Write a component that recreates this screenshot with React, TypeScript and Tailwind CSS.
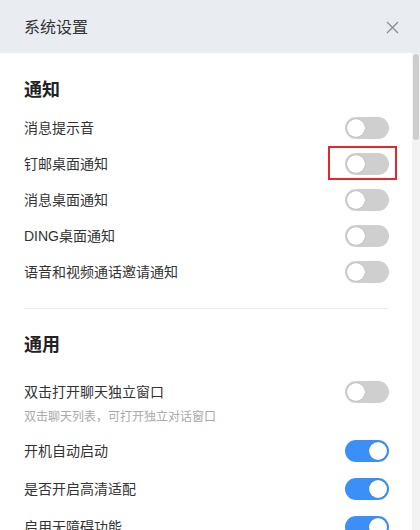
import React from 'react'

const Toggle = ({ on, marked }: { on?: boolean; marked?: boolean }) => (
    <div className="relative shrink-0">
        <div className={`w-[44px] h-[22px] rounded-full flex items-center px-[2px] ${on ? 'bg-[#3b8ff6] justify-end' : 'bg-[#cfcfcf] justify-start'}`}>
            <div className="w-[18px] h-[18px] rounded-full bg-white shadow-[0_0_1px_rgba(0,0,0,0.35)]" />
        </div>
        {marked && (
            <div className="absolute -left-[17px] -top-[7px] w-[69px] h-[34px] border-2 border-[#e5262b]" />
        )}
    </div>
)

const Row = ({ label, on, marked, h = 'h-[36px]' }: { label: string; on?: boolean; marked?: boolean; h?: string }) => (
    <div className={`flex items-center justify-between ${h}`}>
        <span className="text-[14px] text-[#333]">{label}</span>
        <Toggle on={on} marked={marked} />
    </div>
)

export default function App() {
    return (
        <div className="w-[420px] h-[530px] overflow-hidden bg-white flex flex-col" style={{ fontFamily: '"Liberation Sans", "Noto Sans CJK SC", sans-serif' }}>
            <div className="h-[53px] shrink-0 bg-[#e9ecf1] flex items-center justify-between pl-[24px] pr-[21px] pt-[2px]">
                <span className="text-[16px] text-[#333]">系统设置</span>
                <svg width="13" height="13" viewBox="0 0 13 13" stroke="#8a8a8a" strokeWidth="1.2">
                    <path d="M1 1 L12 12 M12 1 L1 12" />
                </svg>
            </div>
            <div className="flex flex-1 min-h-0">
                <div className="flex-1 pl-[24px] pr-[23px] pt-[25px]">
                    <div className="text-[18px] leading-[24px] font-bold text-[#222]">通知</div>
                    <div className="mt-[8px]">
                        <Row label="消息提示音" />
                        <Row label="钉邮桌面通知" marked />
                        <Row label="消息桌面通知" />
                        <Row label="DING桌面通知" />
                        <Row label="语音和视频通话邀请通知" />
                    </div>
                    <div className="mt-[18px] h-px bg-[#ececec]" />
                    <div className="mt-[24px] text-[18px] leading-[24px] font-bold text-[#222]">通用</div>
                    <div className="mt-[24px] flex items-start justify-between">
                        <div className="flex flex-col">
                            <span className="text-[14px] leading-[22px] text-[#333]">双击打开聊天独立窗口</span>
                            <span className="text-[12px] leading-[16px] text-[#aaa] mt-[6px]">双击聊天列表，可打开独立对话窗口</span>
                        </div>
                        <Toggle />
                    </div>
                    <div className="mt-[7px]">
                        <Row label="开机自动启动" on h="h-[38px]" />
                        <Row label="是否开启高清适配" on h="h-[38px]" />
                        <Row label="启用无障碍功能" on h="h-[38px]" />
                    </div>
                </div>
                <div className="w-[8px] shrink-0 bg-[#f3f3f3] pt-[1px] pl-[1px]">
                    <div className="w-[6px] h-[86px] rounded-full bg-[#cdcdcd]" />
                </div>
            </div>
        </div>
    )
}
